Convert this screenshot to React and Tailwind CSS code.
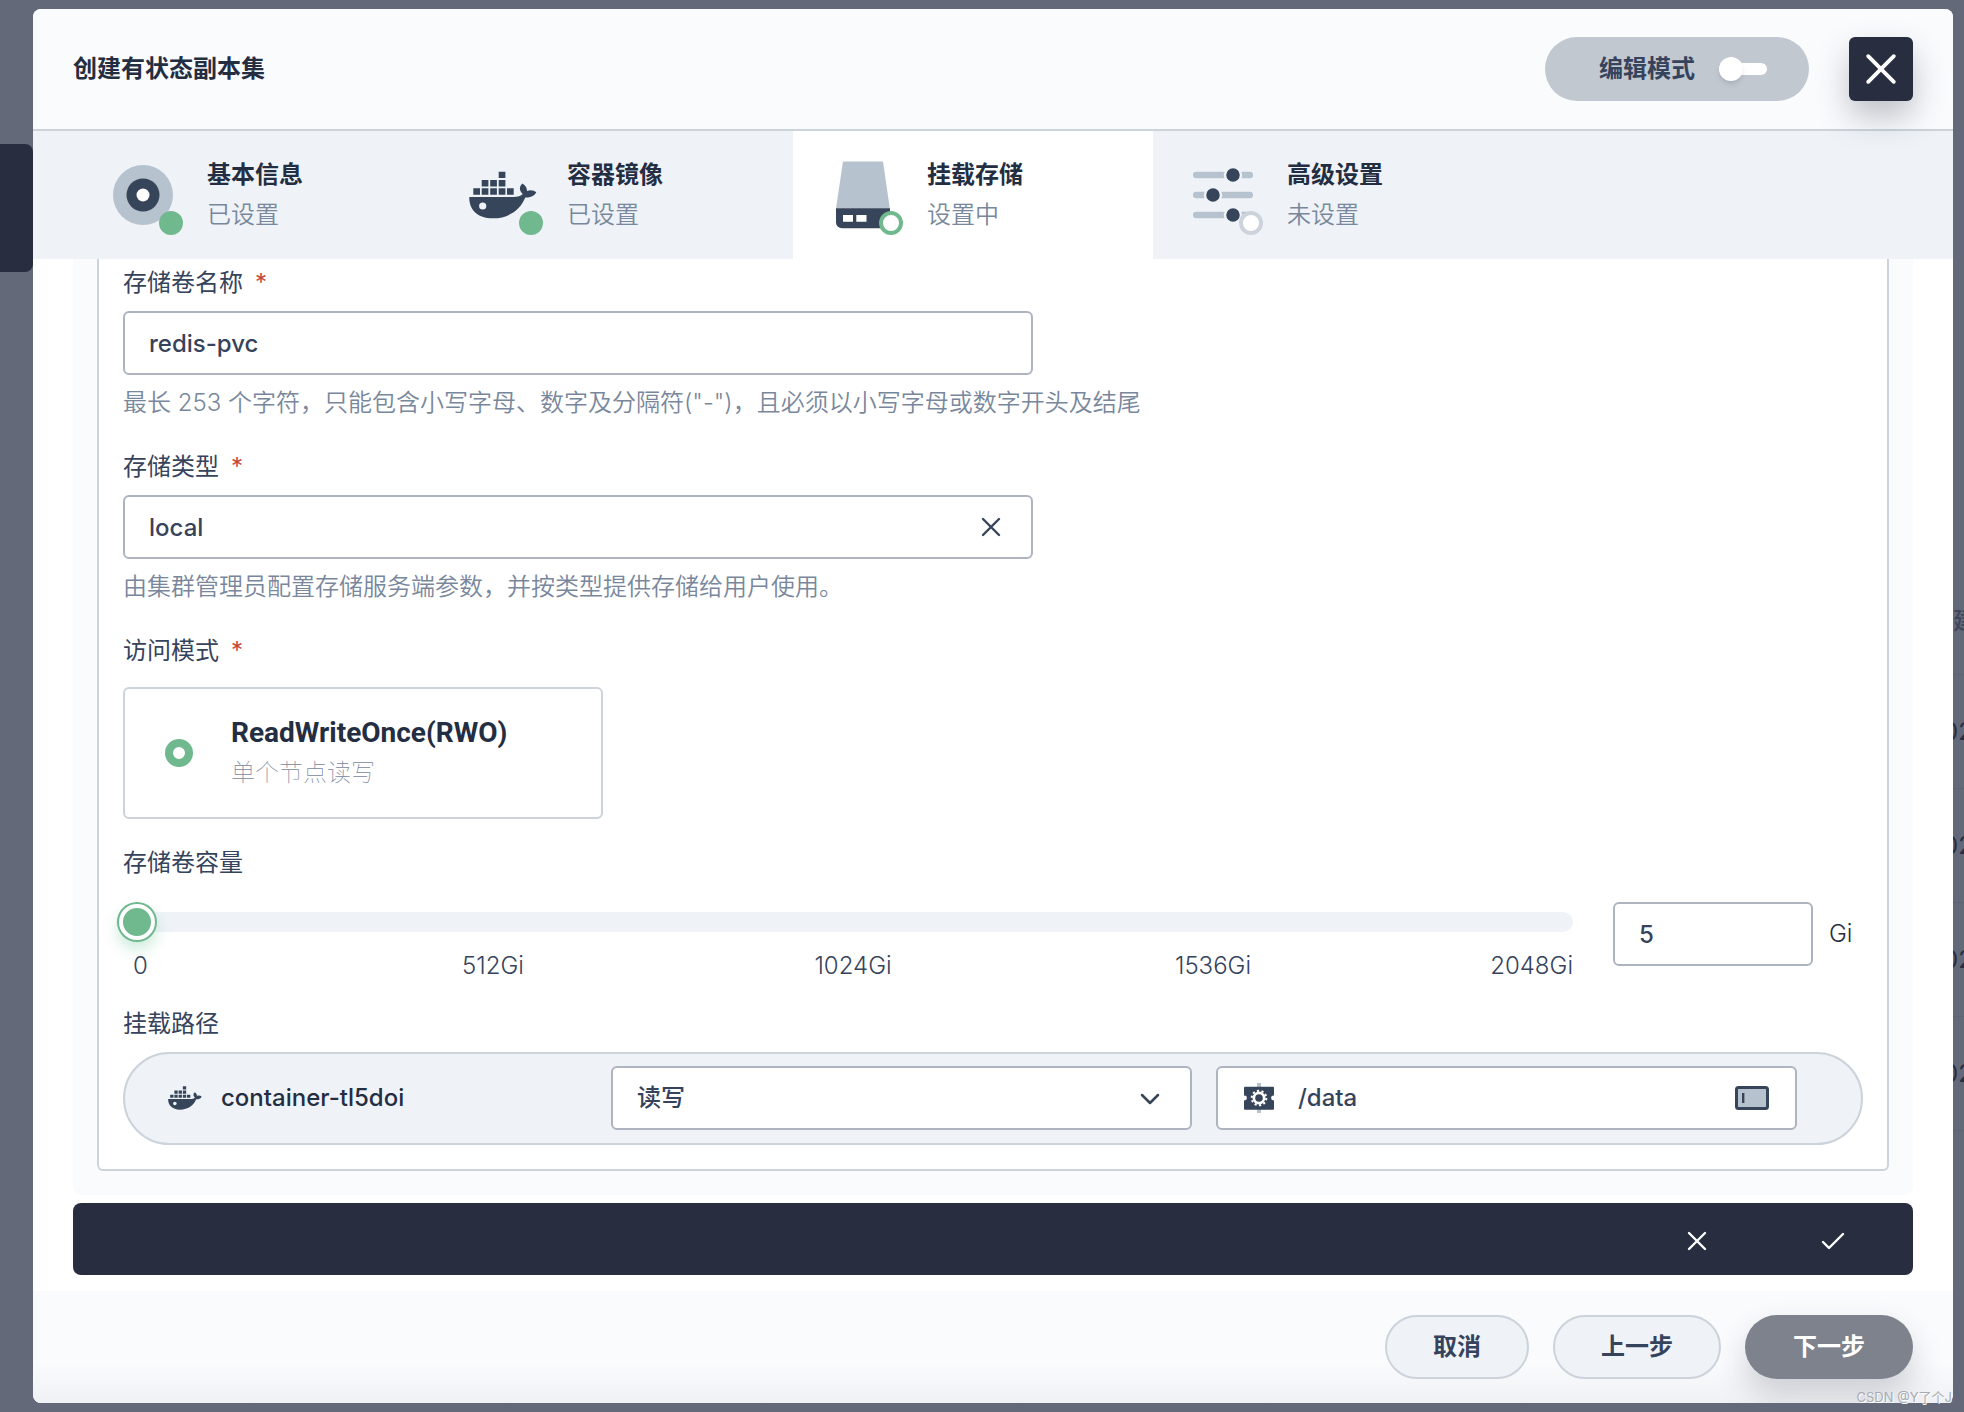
import { useState } from "react";

const STEPS = [
  { name: "基本信息", state: "已设置", status: "done", Icon: InfoIcon },
  { name: "容器镜像", state: "已设置", status: "done", Icon: DockerIcon },
  { name: "挂载存储", state: "设置中", status: "active", Icon: StorageIcon },
  { name: "高级设置", state: "未设置", status: "todo", Icon: SlidersIcon },
];

const DOTS = {
  done: "bg-[#70b88e]",
  active: "border-4 border-[#70b88e] bg-white",
  todo: "border-4 border-[#ccd3db] bg-white",
};

const FIELD =
  "h-16 rounded-md border-2 border-[#adb4c0] bg-white text-2xl font-medium text-[#36435c] outline-none";

/* Icons */
function InfoIcon({ className }) {
  return (
    <svg viewBox="0 0 80 80" className={className}>
      <circle cx="40" cy="40" r="30" fill="#b6c2cd" />
      <circle cx="40" cy="40" r="16.5" fill="#364559" />
      <circle cx="40" cy="40" r="6.5" fill="#fff" />
    </svg>
  );
}

function DockerIcon({ className }) {
  return (
    <svg viewBox="0 0 80 80" className={className} fill="#364559">
      <path d="M35.7 16.7h6.7v6.4h-6.7zM18.7 25h6.7v6.4h-6.7zM27.2 25h6.7v6.4h-6.7zM35.7 25h6.7v6.4h-6.7zM10.3 33.3H17v6.4h-6.7zM18.7 33.3h6.7v6.4h-6.7zM27.2 33.3h6.7v6.4h-6.7zM35.7 33.3h6.7v6.4h-6.7zM44 33.3h6.7v6.4H44z" />
      <path d="M6.3 42H50c5 0 8-1 9.8-3-3.8-3-3.8-7.5-.5-10.5C62.5 30 64 33 64 36c3-1.3 7-1 9.3 1.3-2 4.2-6.3 5.4-11 5.2C57.5 54.5 46 63.3 30 63.3 14 63.3 6 54 6.3 42z" />
      <circle cx="19.7" cy="51" r="3.6" fill="#eff3f8" />
    </svg>
  );
}

function StorageIcon({ className }) {
  return (
    <svg viewBox="0 0 80 80" className={className}>
      <path d="M20 6.5h40l6.8 47H13z" fill="#b6c2cd" />
      <path d="M13 53.3h54v20H19a6 6 0 0 1-6-6z" fill="#364559" />
      <path d="M20 60h10v6.7H20zM33.3 60h10.2v6.7H33.3z" fill="#fff" />
    </svg>
  );
}

function SlidersIcon({ className }) {
  return (
    <svg viewBox="0 0 80 80" className={className}>
      {[
        [50, 20],
        [30, 40],
        [50, 60],
      ].map(([x, y]) => (
        <g key={y}>
          <rect x="10" y={y - 3.3} width="60" height="6.6" rx="3" fill="#b6c2cd" />
          <circle cx={x} cy={y} r="8" fill="#364559" stroke="#eff3f8" strokeWidth="2.5" />
        </g>
      ))}
    </svg>
  );
}

function CrossIcon({ className }) {
  return (
    <svg viewBox="0 0 20 20" className={className} fill="none" stroke="currentColor" strokeWidth="2.4" strokeLinecap="round">
      <path d="M2 2l16 16M18 2L2 18" />
    </svg>
  );
}

function CheckIcon({ className }) {
  return (
    <svg viewBox="0 0 24 18" className={className} fill="none" stroke="currentColor" strokeWidth="2.4" strokeLinecap="round" strokeLinejoin="round">
      <path d="M2 10l6 6L22 2" />
    </svg>
  );
}

function GearBoxIcon({ className }) {
  return (
    <svg viewBox="0 0 30 30" className={className}>
      <path d="M13 0h4v30h-4z" fill="#b6c2cd" />
      <rect y="3.8" width="30" height="23" rx="1" fill="#364559" />
      <circle cx="0.5" cy="15" r="2.4" fill="#fff" />
      <circle cx="29.5" cy="15" r="2.4" fill="#fff" />
      <circle cx="15" cy="15" r="6.5" fill="#fff" />
      <circle cx="15" cy="15" r="7.3" fill="none" stroke="#fff" strokeWidth="2" strokeDasharray="2.2 2.386" />
      <circle cx="15" cy="15" r="3.8" fill="#364559" />
    </svg>
  );
}

function SlotIcon({ className }) {
  return (
    <svg viewBox="0 0 34 24" className={className}>
      <rect x="1.5" y="1.5" width="31" height="21" rx="2" fill="#b6c2cd" stroke="#364559" strokeWidth="3" />
      <path d="M7 7h2.4v10H7z" fill="#364559" />
    </svg>
  );
}

function Label({ htmlFor, required, children }) {
  return (
    <label htmlFor={htmlFor} className="block leading-8 text-[#36435c]">
      {children}
      {required && <span className="ml-3 text-[#c7473a]">*</span>}
    </label>
  );
}

function Hint({ children }) {
  return <p className="mt-3 leading-8 font-[350] text-[#79879c]">{children}</p>;
}

function Header() {
  return (
    <header className="relative flex items-center justify-between border-b-2 border-[#ccd3db] bg-[#fafbfd] px-10 py-7">
      <h1 className="font-semibold text-[#242e42]">创建有状态副本集</h1>
      <div className="flex items-center gap-10">
        <label className="flex h-16 items-center gap-6 rounded-full bg-[#c1c8d0] pr-[42px] pl-[54px] font-semibold text-[#36435c]">
          编辑模式
          <input
            type="checkbox"
            role="switch"
            className="relative h-3 w-12 appearance-none rounded-full bg-white before:absolute before:-top-1.5 before:left-0 before:size-6 before:rounded-full before:bg-white before:shadow-md"
          />
        </label>
        <button
          type="button"
          aria-label="关闭"
          className="flex size-16 items-center justify-center rounded-md bg-[#282e40] text-white shadow-[0_16px_32px_0_rgba(36,46,66,0.28)]"
        >
          <CrossIcon className="size-8" />
        </button>
      </div>
    </header>
  );
}

function Steps() {
  return (
    <nav className="flex h-32 bg-[#eff3f8] pl-10">
      {STEPS.map(({ name, state, status, Icon }) => (
        <button
          key={name}
          type="button"
          className={`flex w-[360px] items-center gap-6 pl-[30px] text-left ${status === "active" ? "bg-white" : ""}`}
        >
          <span className="relative">
            <Icon className="size-20" />
            <span className={`absolute right-0 bottom-0 size-6 rounded-full ${DOTS[status]}`} />
          </span>
          <span className="flex flex-col gap-2 leading-8">
            <span className="font-semibold text-[#242e42]">{name}</span>
            <span className="font-[350] text-[#79879c]">{state}</span>
          </span>
        </button>
      ))}
    </nav>
  );
}

function VolumeForm() {
  const [name, setName] = useState("redis-pvc");
  const [type, setType] = useState("local");
  const [size, setSize] = useState(5);
  const [path, setPath] = useState("/data");

  return (
    <form className="rounded-b-lg bg-[#fafbfd] px-6 pb-6">
      <div className="rounded-b-md border-2 border-t-0 border-[#ccd3db] bg-white px-6 pt-2 pb-6">
        {/* Volume name */}
        <Label htmlFor="name" required>存储卷名称</Label>
        <input
          id="name"
          type="text"
          value={name}
          onChange={(e) => setName(e.target.value)}
          className={`${FIELD} mt-3 block w-full max-w-[910px] px-6`}
        />
        <Hint>最长 253 个字符，只能包含小写字母、数字及分隔符("-")，且必须以小写字母或数字开头及结尾</Hint>

        {/* Storage class */}
        <div className="mt-8">
          <Label htmlFor="type" required>存储类型</Label>
          <div className={`${FIELD} mt-3 flex max-w-[910px] items-center pr-[30px]`}>
            <input
              id="type"
              type="text"
              value={type}
              onChange={(e) => setType(e.target.value)}
              className="h-full flex-1 pl-6 outline-none"
            />
            <button type="button" aria-label="清除" onClick={() => setType("")}>
              <CrossIcon className="size-5 text-[#364559]" />
            </button>
          </div>
          <Hint>由集群管理员配置存储服务端参数，并按类型提供存储给用户使用。</Hint>
        </div>

        {/* Access mode */}
        <div className="mt-8">
          <Label htmlFor="rwo" required>访问模式</Label>
          <label className="mt-5 flex h-[132px] max-w-[480px] items-center gap-[38px] rounded-md border-2 border-[#ccd3db] pl-10">
            <input
              id="rwo"
              type="radio"
              name="mode"
              defaultChecked
              className="size-7 appearance-none rounded-full border-8 border-[#70b88e] bg-white"
            />
            <span className="flex flex-col gap-2 leading-8">
              <span className="font-['Roboto'] text-[28px] font-bold text-[#242e42]">ReadWriteOnce(RWO)</span>
              <span className="font-thin text-[#79879c]">单个节点读写</span>
            </span>
          </label>
        </div>

        {/* Capacity */}
        <div className="mt-7">
          <Label htmlFor="capacity">存储卷容量</Label>
          <div className="mt-[23px] flex items-start">
            <div className="flex-1">
              <div className="-ml-[7px] flex h-10 items-center">
                <input
                  id="capacity"
                  type="range"
                  min="0"
                  max="2048"
                  value={size}
                  onChange={(e) => setSize(e.target.value)}
                  className="h-5 w-full appearance-none rounded-full bg-[#eff3f8] [&::-webkit-slider-thumb]:size-9 [&::-webkit-slider-thumb]:appearance-none [&::-webkit-slider-thumb]:rounded-full [&::-webkit-slider-thumb]:border-4 [&::-webkit-slider-thumb]:border-white [&::-webkit-slider-thumb]:bg-[#70b88e] [&::-webkit-slider-thumb]:shadow-[0_0_0_2px_#70b88e,0_8px_16px_0_rgba(85,188,138,0.36)]"
                />
              </div>
              <div className="mt-2 grid grid-cols-[19fr_36fr_36fr_36fr_18fr] text-center leading-8 font-light text-[#36435c]">
                <span className="pl-2.5 text-left">0</span>
                <span>512Gi</span>
                <span>1024Gi</span>
                <span>1536Gi</span>
                <span className="text-right">2048Gi</span>
              </div>
            </div>
            <input
              type="text"
              aria-label="存储卷容量 (Gi)"
              value={size}
              onChange={(e) => setSize(e.target.value)}
              className={`${FIELD} ml-10 w-[200px] px-6`}
            />
            <span className="w-[50px] pl-4 leading-16 font-light text-[#242e42]">Gi</span>
          </div>
        </div>

        {/* Mount path */}
        <div className="mt-[26px]">
          <Label htmlFor="path">挂载路径</Label>
          <div className="mt-3 grid grid-cols-[422px_1fr_1fr] items-center gap-6 rounded-full border-2 border-[#ccd3db] bg-[#eff3f8] pt-3 pr-16 pb-[13px] pl-10">
            <div className="flex items-center gap-4 font-medium text-[#242e42]">
              <DockerIcon className="size-10" />
              container-tl5doi
            </div>
            <div className="relative">
              <select aria-label="读写权限" className={`${FIELD} w-full appearance-none px-6`}>
                <option>读写</option>
              </select>
              <svg
                viewBox="0 0 20 12"
                className="pointer-events-none absolute top-[27px] right-8 h-3 w-5"
                fill="none"
                stroke="#364559"
                strokeWidth="2.5"
                strokeLinecap="round"
                strokeLinejoin="round"
              >
                <path d="M2 2l8 8 8-8" />
              </svg>
            </div>
            <div className={`${FIELD} flex items-center gap-6 px-[26px]`}>
              <GearBoxIcon className="size-[30px]" />
              <input
                id="path"
                type="text"
                value={path}
                onChange={(e) => setPath(e.target.value)}
                className="min-w-0 flex-1 outline-none"
              />
              <SlotIcon className="h-6 w-[34px]" />
            </div>
          </div>
        </div>
      </div>
    </form>
  );
}

function Footer() {
  const plain = "h-16 rounded-full border-2 border-[#ccd3db] bg-[#eff3f8] px-[46px] font-semibold text-[#36435c]";
  return (
    <footer className="flex justify-end gap-6 bg-linear-to-b from-[#fafbfd] from-65% to-[#f0f1f4] px-10 py-6">
      <button type="button" className={plain}>取消</button>
      <button type="button" className={plain}>上一步</button>
      <button
        type="button"
        className="h-16 rounded-full bg-[#7e828d] px-12 font-semibold text-white shadow-[0_16px_32px_0_rgba(36,46,66,0.2)]"
      >
        下一步
      </button>
    </footer>
  );
}

export default function App() {
  return (
    <div className="relative flex min-h-screen overflow-hidden bg-[#636978] font-['Inter','Noto_Sans_CJK_SC',sans-serif] text-2xl">
      <div className="w-[33px] shrink-0 pt-36">
        <div className="h-32 rounded-r-lg bg-[#282e40]" />
      </div>

      <main className="my-[9px] flex min-w-0 flex-1 flex-col self-start overflow-hidden rounded-lg bg-white">
        <Header />
        <Steps />
        <div className="px-10 pb-4">
          <VolumeForm />
          <div className="mt-2 flex h-[72px] justify-end rounded-lg bg-[#282e40] pt-1 pr-3 text-white">
            <button type="button" aria-label="取消编辑" className="flex w-[136px] items-center justify-center">
              <CrossIcon className="size-5" />
            </button>
            <button type="button" aria-label="确定" className="flex w-[136px] items-center justify-center">
              <CheckIcon className="h-[18px] w-6" />
            </button>
          </div>
        </div>
        <Footer />
      </main>

      {/* Page behind the dialog */}
      <div className="w-[11px] shrink-0 overflow-hidden pt-[568px] whitespace-nowrap text-[#282e40]">
        <div className="flex h-[107px] items-center border-b border-[#5d6372] font-medium text-[#3f475c]">建</div>
        {[1, 2, 3, 4].map((row) => (
          <div key={row} className="flex h-[114px] items-center border-b border-[#5d6372]">
            <span className="-ml-2.5">02</span>
          </div>
        ))}
      </div>

      <span className="absolute right-3 bottom-1.5 text-[13px] text-[#a8abb1] [text-shadow:1px_1px_0_#fff]">CSDN @Y了个J</span>
    </div>
  );
}
